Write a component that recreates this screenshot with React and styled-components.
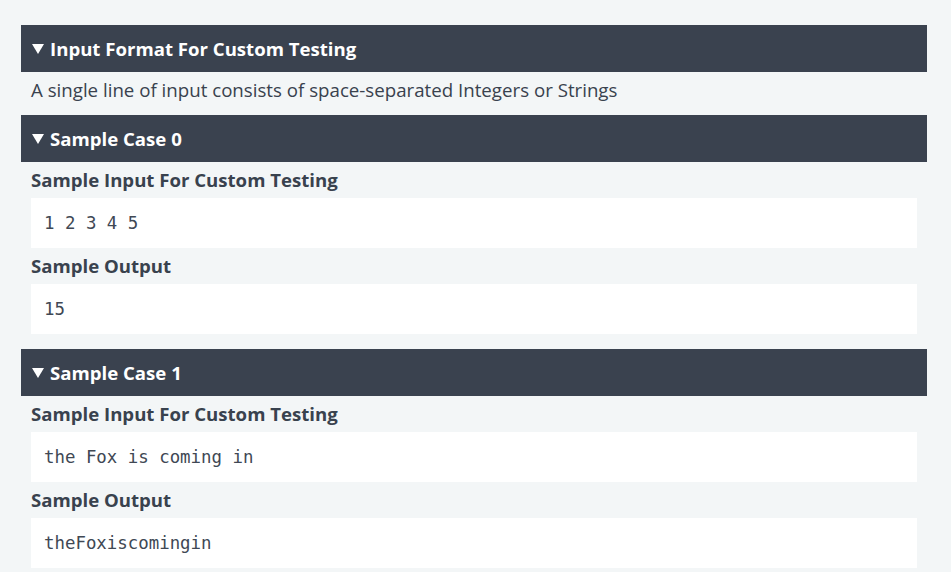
import React from "react";
import styled, { createGlobalStyle } from "styled-components";

const GlobalStyle = createGlobalStyle`
  *, *::before, *::after {
    box-sizing: border-box;
  }
  body {
    margin: 0;
    background: #f3f6f7;
    font-family: "Open Sans", "Noto Sans", sans-serif;
    color: #39424e;
  }
`;

const Page = styled.div`
  padding: 25px 24px 0 21px;
  display: flex;
  flex-direction: column;
`;

const Section = styled.section`
  display: flex;
  flex-direction: column;
  margin-bottom: ${(p) => p.gap || 0}px;
`;

const Bar = styled.div`
  height: 47px;
  background: #3a424f;
  color: #ffffff;
  display: flex;
  align-items: center;
  padding-left: 11px;
  font-weight: 700;
  font-size: 18.6px;
  gap: 6px;
`;

const Caret = styled.span`
  width: 0;
  height: 0;
  border-left: 6px solid transparent;
  border-right: 6px solid transparent;
  border-top: 10px solid #ffffff;
`;

const Body = styled.div`
  padding: 0 10px;
  display: flex;
  flex-direction: column;
`;

const Text = styled.p`
  margin: 5px 0 12px;
  font-size: 18.7px;
  line-height: 26px;
`;

const Label = styled.h4`
  margin: 6px 0;
  font-size: 18.6px;
  line-height: 24px;
  font-weight: 700;
`;

const Code = styled.pre`
  margin: 0;
  height: 50px;
  background: #ffffff;
  display: flex;
  align-items: center;
  padding: 0 13px;
  font-family: "DejaVu Sans Mono", "Liberation Mono", monospace;
  font-size: 17.4px;
  color: #404854;
`;

function Header({ children }) {
  return (
    <Bar>
      <Caret />
      {children}
    </Bar>
  );
}

function SampleCase({ index, input, output, gap }) {
  return (
    <Section gap={gap}>
      <Header>Sample Case {index}</Header>
      <Body>
        <Label>Sample Input For Custom Testing</Label>
        <Code>{input}</Code>
        <Label>Sample Output</Label>
        <Code>{output}</Code>
      </Body>
    </Section>
  );
}

export default function App() {
  return (
    <>
      <GlobalStyle />
      <Page>
        <Section>
          <Header>Input Format For Custom Testing</Header>
          <Body>
            <Text>
              A single line of input consists of space-separated Integers or
              Strings
            </Text>
          </Body>
        </Section>
        <SampleCase index={0} input="1 2 3 4 5" output="15" gap={15} />
        <SampleCase
          index={1}
          input="the Fox is coming in"
          output="theFoxiscomingin"
        />
      </Page>
    </>
  );
}
